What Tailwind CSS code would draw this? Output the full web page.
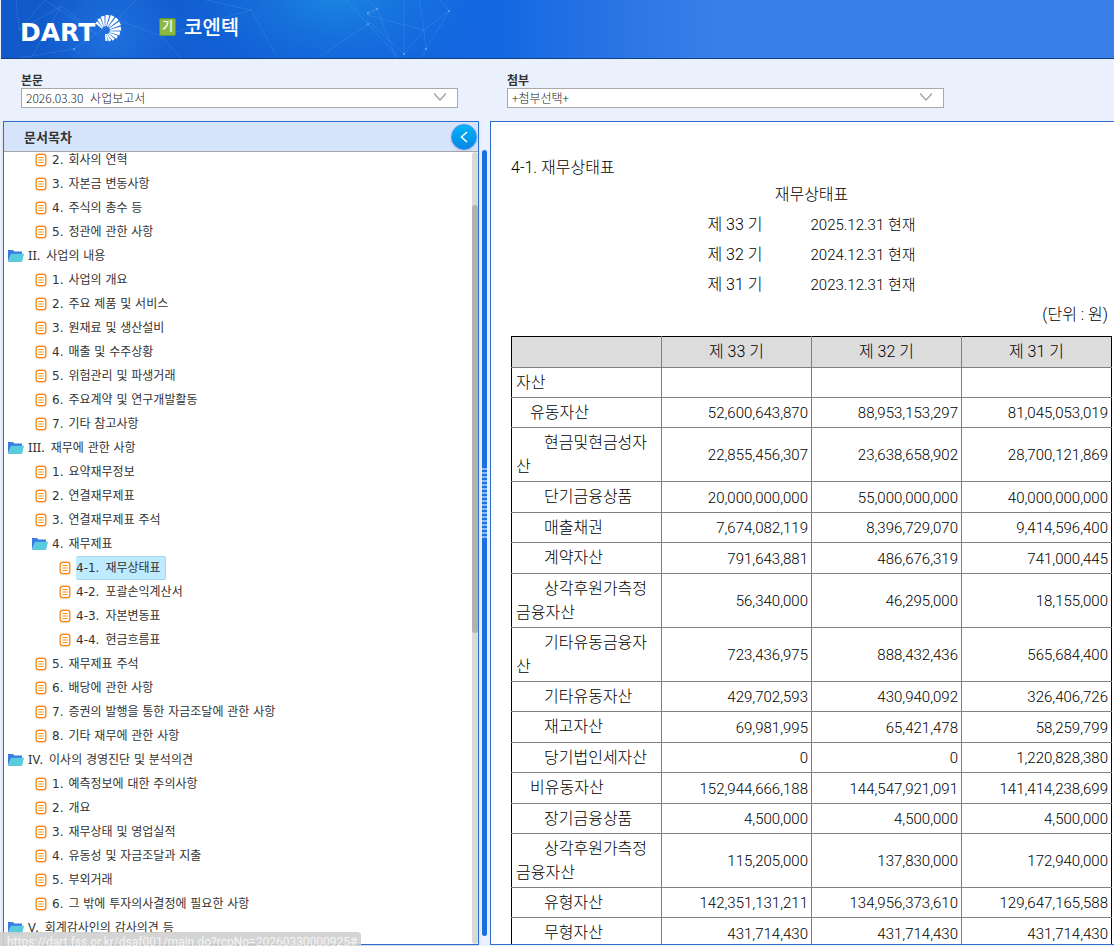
<!DOCTYPE html>
<html lang="ko">
<head>
  <meta charset="UTF-8" />
  <meta name="viewport" content="width=device-width, initial-scale=1.0" />
  <title>코엔텍 - 사업보고서</title>
  <script src="https://cdn.jsdelivr.net/npm/@tailwindcss/browser@4"></script>
</head>
<body class="relative flex h-screen flex-col overflow-hidden bg-[#eaf1fd] pb-px text-[#333] font-['DejaVu_Sans','Noto_Sans_CJK_KR',sans-serif]">

  <!-- Header -->
  <header class="relative ml-px h-[59px] shrink-0 overflow-hidden border-b border-[#0c3f86] bg-linear-to-r from-[#1159c9] via-[#1468e2] via-45% to-[#3a80e8] to-65%">
    <svg class="absolute inset-0 h-full w-[480px]" viewBox="0 0 480 58" preserveAspectRatio="none" aria-hidden="true">
      <defs>
        <radialGradient id="glow" cx="335" cy="-12" r="150" gradientUnits="userSpaceOnUse" gradientTransform="translate(335 0) scale(1 .6) translate(-335 0)">
          <stop offset="0" stop-color="#1f98e4" stop-opacity=".7" />
          <stop offset="1" stop-color="#1878e0" stop-opacity="0" />
        </radialGradient>
        <radialGradient id="glow2" cx="110" cy="34" r="70" gradientUnits="userSpaceOnUse">
          <stop offset="0" stop-color="#2b80ea" stop-opacity=".55" />
          <stop offset="1" stop-color="#2b80ea" stop-opacity="0" />
        </radialGradient>
      </defs>
      <rect width="480" height="58" fill="url(#glow)" />
      <rect width="480" height="58" fill="url(#glow2)" />
      <g fill="none" stroke="#7fc0f5" stroke-opacity=".22" stroke-width=".8">
        <path d="M15 0L18 30L60 6L30 58M18 30L44 0L95 34L60 6M95 34L73 49L82 58M73 49L18 58M95 34L116 20L135 0M116 20L160 36L180 58M160 36L250 10L275 55M250 10L205 0M320 56L367 24L345 0M367 12L376 9L366 0M367 24L398 58M376 9L395 58M376 9L366 15L423 30L448 11L439 0M403 0L403 54L423 30L418 0M423 30L425 49L448 11M425 49L420 58M403 54L366 20" />
      </g>
      <g fill="#9ad0fa" fill-opacity=".6">
        <circle cx="376" cy="9" r="1" /><circle cx="448" cy="11" r="1" /><circle cx="403" cy="54" r="1" />
        <circle cx="425" cy="49" r="1" /><circle cx="367" cy="13" r="1" /><circle cx="367" cy="24" r="1" /><circle cx="73" cy="49" r="1" />
      </g>
    </svg>
    <div class="relative flex items-start pl-5 pt-[13px]">
      <a href="#" aria-label="DART">
        <svg class="h-8 w-[104px] overflow-visible" viewBox="0 0 104 32">
          <text x="-1" y="28" fill="#fff" font-family="DejaVu Sans" font-weight="bold" font-size="25">DART</text>
          <g id="rays"></g>
        </svg>
      </a>
      <span class="ml-[34px] mt-[5px] flex h-[18px] w-[17px] items-center justify-center rounded-xs border border-[#5b9440] bg-[#8cb93e] text-[12px] font-medium text-white">기</span>
      <h1 class="ml-2 text-[20px] leading-[30px] font-medium text-white">코엔텍</h1>
    </div>
  </header>

  <!-- Document pickers -->
  <div class="flex shrink-0 gap-[49px] pl-[21px] pt-[13px] font-['Noto_Sans_CJK_KR',sans-serif] text-[12px]">
    <div class="w-[437px]">
      <label for="doc" class="block h-4 leading-4 font-bold">본문</label>
      <div class="relative">
        <select id="doc" class="block h-5 w-full appearance-none border border-[#a9a9a9] bg-white pl-1 font-light text-[#222]">
          <option>2026.03.30&nbsp; 사업보고서</option>
        </select>
        <svg class="pointer-events-none absolute right-3 top-[5px] h-2 w-3" viewBox="0 0 12 8" fill="none" stroke="#a0a0a0" stroke-width="1.300"><path d="M0 .5l6 6.500l6-6.500" /></svg>
      </div>
    </div>
    <div class="w-[437px]">
      <label for="attach" class="block h-4 leading-4 font-bold">첨부</label>
      <div class="relative">
        <select id="attach" class="block h-5 w-full appearance-none border border-[#a9a9a9] bg-white pl-1 font-light text-[#222]">
          <option>+첨부선택+</option>
        </select>
        <svg class="pointer-events-none absolute right-3 top-[5px] h-2 w-3" viewBox="0 0 12 8" fill="none" stroke="#a0a0a0" stroke-width="1.300"><path d="M0 .5l6 6.500l6-6.500" /></svg>
      </div>
    </div>
  </div>

  <main class="mt-[13px] flex min-h-0 flex-1 pl-[3px]">
    <!-- Table of contents -->
    <aside class="relative flex w-[476px] shrink-0 flex-col border border-[#2f6fcb] bg-white shadow-sm">
      <div class="h-[30px] shrink-0 border-b border-[#a5a5a5] bg-[#d6e4fb] pl-5">
        <h2 class="text-[13px] leading-[31px] font-bold">문서목차</h2>
      </div>
      <button type="button" aria-label="목차 닫기" class="absolute right-px top-[2px] flex size-[26px] items-center justify-center rounded-full border border-[#3b8cf5] bg-linear-to-b from-[#02b4f6] to-[#0887e8] shadow">
        <svg class="h-3 w-2" viewBox="0 0 8 12" fill="none" stroke="#fff" stroke-width="1.6"><path d="M7 1L1.500 6L7 11" /></svg>
      </button>
      <div class="flex min-h-0 flex-1">
        <nav class="min-w-0 flex-1 overflow-hidden">
          <ul id="toc" class="-mt-1 text-[12px]"></ul>
        </nav>
        <div class="w-[6px] rounded-full bg-[#d9d9d9] pt-[53px]">
          <div class="h-[428px] rounded-full bg-[#b2b2b2]"></div>
        </div>
      </div>
    </aside>

    <!-- Splitter -->
    <div class="flex w-[11px] shrink-0 pl-[3px] pt-[29px] pb-[9px]">
      <div class="w-[5px] rounded-full bg-[#1a6fe3] pt-[318px]">
        <div class="h-[71px] bg-[repeating-linear-gradient(to_bottom,#8dbaf5_0_2px,#1a6fe3_2px_4px)]"></div>
      </div>
    </div>

    <!-- Document -->
    <section class="min-w-0 flex-1 overflow-hidden border border-r-0 border-[#2f6fcb] bg-white pl-5 pr-[2px] pt-[34px] text-[15px] font-light text-black font-[Roboto,'Noto_Sans_CJK_KR',sans-serif]">
      <h3 class="text-[16px] leading-6">4-1. 재무상태표</h3>
      <p class="text-center text-[16px] leading-[30px]">재무상태표</p>
      <div class="leading-[30px]">
        <p class="flex justify-center gap-12"><span class="text-[16px]">제 33 기</span><span>2025.12.31 현재</span></p>
        <p class="flex justify-center gap-12"><span class="text-[16px]">제 32 기</span><span>2024.12.31 현재</span></p>
        <p class="flex justify-center gap-12"><span class="text-[16px]">제 31 기</span><span>2023.12.31 현재</span></p>
        <p class="pr-1 text-right text-[16px]">(단위 : 원)</p>
      </div>
      <table class="mt-[6px] w-full table-fixed border-collapse border border-black leading-6">
        <thead class="bg-[#dcdcdc] text-[16px]">
          <tr class="h-[31px]">
            <th class="border border-[#808080] border-t-black border-l-black"></th>
            <th class="border border-[#808080] border-t-black font-light">제 33 기</th>
            <th class="border border-[#808080] border-t-black font-light">제 32 기</th>
            <th class="border border-[#808080] border-t-black border-r-black font-light">제 31 기</th>
          </tr>
        </thead>
        <tbody id="rows"></tbody>
      </table>
    </section>
  </main>

  <!-- Link address bubble -->
  <div class="absolute bottom-0 left-0 h-[14px] overflow-hidden rounded-tr bg-[#cfcfcf]/90 pl-[7px] pr-1 pt-[2px] text-[12px] leading-4 text-[#f4f4f4] font-[Roboto,sans-serif]">https://dart.fss.or.kr/dsaf001/main.do?rcpNo=20260330000925#</div>

  <script>
    // [level, number, title, type]
    const toc = [
      [1, '2.', '회사의 연혁'],
      [1, '3.', '자본금 변동사항'],
      [1, '4.', '주식의 총수 등'],
      [1, '5.', '정관에 관한 사항'],
      [0, 'II.', '사업의 내용', 'folder'],
      [1, '1.', '사업의 개요'],
      [1, '2.', '주요 제품 및 서비스'],
      [1, '3.', '원재료 및 생산설비'],
      [1, '4.', '매출 및 수주상황'],
      [1, '5.', '위험관리 및 파생거래'],
      [1, '6.', '주요계약 및 연구개발활동'],
      [1, '7.', '기타 참고사항'],
      [0, 'III.', '재무에 관한 사항', 'folder'],
      [1, '1.', '요약재무정보'],
      [1, '2.', '연결재무제표'],
      [1, '3.', '연결재무제표 주석'],
      [1, '4.', '재무제표', 'folder'],
      [2, '4-1.', '재무상태표', 'active'],
      [2, '4-2.', '포괄손익계산서'],
      [2, '4-3.', '자본변동표'],
      [2, '4-4.', '현금흐름표'],
      [1, '5.', '재무제표 주석'],
      [1, '6.', '배당에 관한 사항'],
      [1, '7.', '증권의 발행을 통한 자금조달에 관한 사항'],
      [1, '8.', '기타 재무에 관한 사항'],
      [0, 'IV.', '이사의 경영진단 및 분석의견', 'folder'],
      [1, '1.', '예측정보에 대한 주의사항'],
      [1, '2.', '개요'],
      [1, '3.', '재무상태 및 영업실적'],
      [1, '4.', '유동성 및 자금조달과 지출'],
      [1, '5.', '부외거래'],
      [1, '6.', '그 밖에 투자의사결정에 필요한 사항'],
      [0, 'V.', '회계감사인의 감사의견 등', 'folder'],
    ];

    const tocIndent = ['pl-1', 'pl-7', 'pl-[52px]'];

    const folderIcon = `<svg class="mr-1 h-4 w-4 shrink-0" viewBox="0 0 16 16">
      <path d="M0 2h5l1.500 1.500H14v3H3L0 13.500z" fill="#3b7de8"/>
      <path d="M3 5.800h13L14 14H0z" fill="#5acbdc"/></svg>`;
    const docIcon = `<svg class="mr-1 h-4 w-4 shrink-0" viewBox="0 0 16 16" fill="none" stroke="#f98f1a">
      <rect x="4.200" y="2.200" width="9.600" height="11.600" rx="2.500" stroke-width="1.400"/>
      <path d="M6.500 5.500h5M6.500 8h5M6.500 10.500h5" stroke-width="1.200"/></svg>`;

    document.getElementById('toc').innerHTML = toc.map(([level, num, title, type]) => {
      const numClass = level === 0 ? "mr-[6px] text-[13px] font-['Noto_Sans']" : level === 1 ? 'mr-[5px]' : 'mr-[6px]';
      const active = type === 'active' ? 'border-[#a5d8f0] bg-[#beebff] pr-1' : 'border-transparent';
      return `<li class="flex h-6 items-center ${tocIndent[level]}">
        ${type === 'folder' ? folderIcon : docIcon}
        <a href="#" class="flex h-6 items-center whitespace-nowrap rounded-xs border-y border-r ${active}"><span class="${numClass}">${num}</span>${title}</a>
      </li>`;
    }).join('');

    // [indent, account, 33rd, 32nd, 31st, row height]
    const rows = [
      [0, '자산', '', '', '', 'h-[30px]'],
      [1, '유동자산', '52,600,643,870', '88,953,153,297', '81,045,053,019', 'h-[30px]'],
      [2, '현금및현금성자산', '22,855,456,307', '23,638,658,902', '28,700,121,869', 'h-[54px]'],
      [2, '단기금융상품', '20,000,000,000', '55,000,000,000', '40,000,000,000', 'h-[31px]'],
      [2, '매출채권', '7,674,082,119', '8,396,729,070', '9,414,596,400', 'h-[30px]'],
      [2, '계약자산', '791,643,881', '486,676,319', '741,000,445', 'h-[31px]'],
      [2, '상각후원가측정금융자산', '56,340,000', '46,295,000', '18,155,000', 'h-[54px]'],
      [2, '기타유동금융자산', '723,436,975', '888,432,436', '565,684,400', 'h-[54px]'],
      [2, '기타유동자산', '429,702,593', '430,940,092', '326,406,726', 'h-[30px]'],
      [2, '재고자산', '69,981,995', '65,421,478', '58,259,799', 'h-[31px]'],
      [2, '당기법인세자산', '0', '0', '1,220,828,380', 'h-[30px]'],
      [1, '비유동자산', '152,944,666,188', '144,547,921,091', '141,414,238,699', 'h-[31px]'],
      [2, '장기금융상품', '4,500,000', '4,500,000', '4,500,000', 'h-[30px]'],
      [2, '상각후원가측정금융자산', '115,205,000', '137,830,000', '172,940,000', 'h-[54px]'],
      [2, '유형자산', '142,351,131,211', '134,956,373,610', '129,647,165,588', 'h-[30px]'],
      [2, '무형자산', '431,714,430', '431,714,430', '431,714,430', 'h-[31px]'],
    ];

    const rowIndent = ['', 'indent-[14px]', 'indent-7'];

    document.getElementById('rows').innerHTML = rows.map(([indent, name, a, b, c, height]) => `
      <tr class="${height}">
        <td class="border border-[#808080] border-l-black px-1 text-[16px] break-all ${rowIndent[indent]}">${name}</td>
        <td class="border border-[#808080] pt-px pr-[3px] text-right">${a}</td>
        <td class="border border-[#808080] pt-px pr-[3px] text-right">${b}</td>
        <td class="border border-[#808080] border-r-black pt-px pr-[3px] text-right">${c}</td>
      </tr>`).join('');

    // Logo rays fan out from a point left of the disc's centre and end on its rim
    const disc = { x: 87, y: 15, r: 13 };
    const origin = { x: 84, y: 18 };
    let rays = '';
    for (let i = 0; i < 13; i++) {
      const angle = -135 + i * 18;
      const t = angle * Math.PI / 180;
      const dx = origin.x - disc.x, dy = origin.y - disc.y;
      const b = dx * Math.cos(t) + dy * Math.sin(t);
      const len = -b + Math.sqrt(b * b - dx * dx - dy * dy + disc.r * disc.r);
      const half = len * 0.12;
      rays += `<path d="M${len * 0.3} -.5L${len} ${-half}V${half}L${len * 0.3} .5z" fill="#fff" transform="translate(${origin.x} ${origin.y}) rotate(${angle})"/>`;
    }
    document.getElementById('rays').innerHTML = rays;
  </script>
</body>
</html>
